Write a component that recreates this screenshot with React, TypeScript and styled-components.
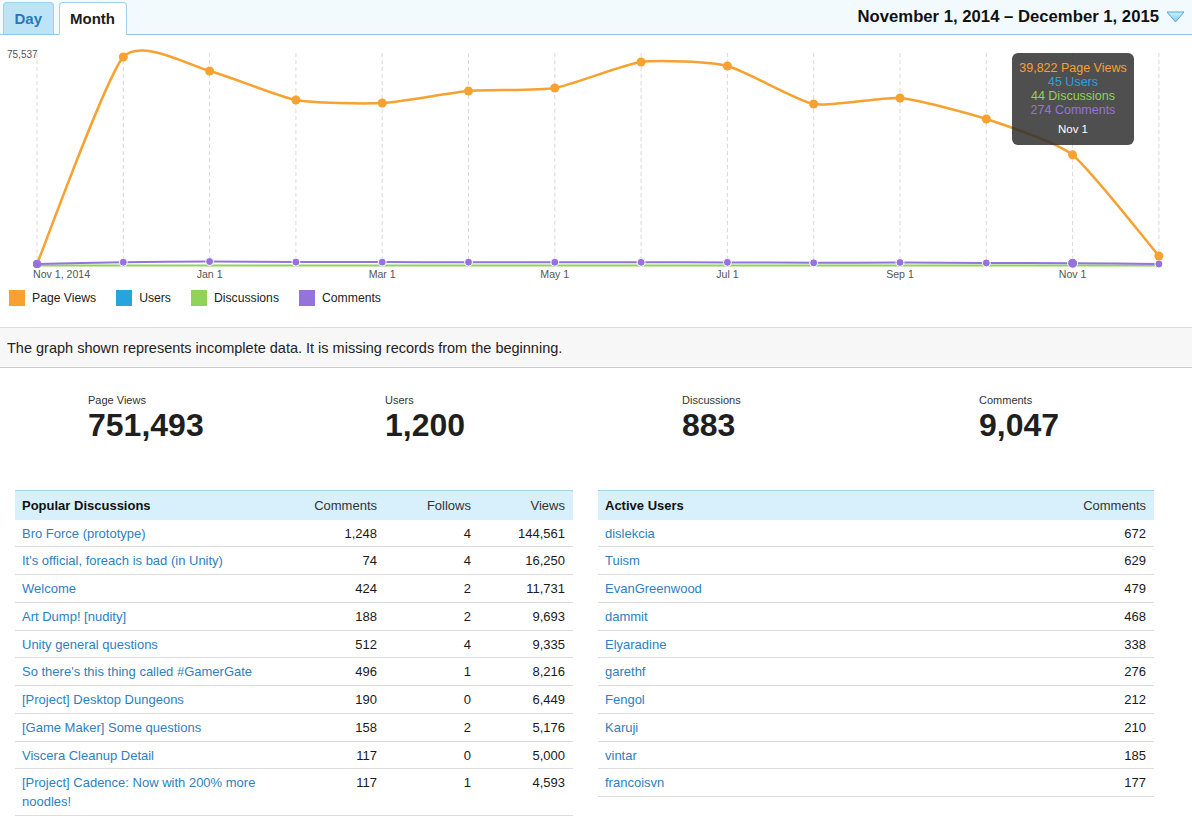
import React from 'react';
import styled, { createGlobalStyle } from 'styled-components';

const GlobalStyle = createGlobalStyle`
  html, body {
    margin: 0;
    padding: 0;
    background: #fff;
  }
  body {
    font-family: 'Liberation Sans', Arial, sans-serif;
    color: #222;
  }
`;

const COLORS = {
  views: '#f7a130',
  users: '#27a3dd',
  discussions: '#8fd457',
  comments: '#9474db',
};

// chart geometry (svg space; svg starts at page y=35)
const X0 = 37;
const STEP = 86.3;
const BASE = 229;
const PLOT_H = 207;
const MAX = 75537;

const pageViews = [0, 75537, 70428, 59845, 58750, 63130, 64224, 73712, 72253, 58385, 60575, 52912, 39822, 2919];
const comments = [0, 640, 900, 700, 680, 660, 640, 620, 600, 420, 560, 380, 274, 10];
const discussions = [0, 70, 90, 70, 60, 60, 60, 55, 55, 45, 50, 40, 44, 2];

const axisLabels = [
  { i: 0, text: 'Nov 1, 2014', anchor: 'start' as const, dx: -4 },
  { i: 2, text: 'Jan 1', anchor: 'middle' as const, dx: 0 },
  { i: 4, text: 'Mar 1', anchor: 'middle' as const, dx: 0 },
  { i: 6, text: 'May 1', anchor: 'middle' as const, dx: 0 },
  { i: 8, text: 'Jul 1', anchor: 'middle' as const, dx: 0 },
  { i: 10, text: 'Sep 1', anchor: 'middle' as const, dx: 0 },
  { i: 12, text: 'Nov 1', anchor: 'middle' as const, dx: 0 },
];

const px = (i: number) => X0 + i * STEP;
const py = (v: number) => BASE - (v / MAX) * PLOT_H;

const spline = (values: number[], offset = 0) => {
  const pts = values.map((v, i) => [px(i), py(v) + offset]);
  const k = 10;
  let d = `M${pts[0][0]},${pts[0][1]}`;
  for (let i = 0; i < pts.length - 1; i++) {
    const p0 = pts[i - 1] || pts[i];
    const p1 = pts[i];
    const p2 = pts[i + 1];
    const p3 = pts[i + 2] || p2;
    const c1x = p1[0] + (p2[0] - p0[0]) / k;
    const c1y = p1[1] + (p2[1] - p0[1]) / k;
    const c2x = p2[0] - (p3[0] - p1[0]) / k;
    const c2y = p2[1] - (p3[1] - p1[1]) / k;
    d += ` C${c1x.toFixed(1)},${c1y.toFixed(1)} ${c2x.toFixed(1)},${c2y.toFixed(1)} ${p2[0].toFixed(1)},${p2[1].toFixed(1)}`;
  }
  return d;
};

const discussionsRows = [
  { name: 'Bro Force (prototype)', comments: '1,248', follows: '4', views: '144,561' },
  { name: "It's official, foreach is bad (in Unity)", comments: '74', follows: '4', views: '16,250' },
  { name: 'Welcome', comments: '424', follows: '2', views: '11,731' },
  { name: 'Art Dump! [nudity]', comments: '188', follows: '2', views: '9,693' },
  { name: 'Unity general questions', comments: '512', follows: '4', views: '9,335' },
  { name: "So there's this thing called #GamerGate", comments: '496', follows: '1', views: '8,216' },
  { name: '[Project] Desktop Dungeons', comments: '190', follows: '0', views: '6,449' },
  { name: '[Game Maker] Some questions', comments: '158', follows: '2', views: '5,176' },
  { name: 'Viscera Cleanup Detail', comments: '117', follows: '0', views: '5,000' },
  { name: '[Project] Cadence: Now with 200% more noodles!', comments: '117', follows: '1', views: '4,593' },
];

const userRows = [
  { name: 'dislekcia', comments: '672' },
  { name: 'Tuism', comments: '629' },
  { name: 'EvanGreenwood', comments: '479' },
  { name: 'dammit', comments: '468' },
  { name: 'Elyaradine', comments: '338' },
  { name: 'garethf', comments: '276' },
  { name: 'Fengol', comments: '212' },
  { name: 'Karuji', comments: '210' },
  { name: 'vintar', comments: '185' },
  { name: 'francoisvn', comments: '177' },
];

const stats = [
  { label: 'Page Views', value: '751,493' },
  { label: 'Users', value: '1,200' },
  { label: 'Discussions', value: '883' },
  { label: 'Comments', value: '9,047' },
];

const Page = styled.div`
  width: 1192px;
`;

const TabBar = styled.div`
  height: 35px;
  box-sizing: border-box;
  display: flex;
  align-items: flex-end;
  gap: 5px;
  padding: 0 7px 0 3px;
  background: #f3fafd;
  border-bottom: 1px solid #8dc7e5;
`;

const Tab = styled.div<{ $active?: boolean }>`
  height: 33px;
  box-sizing: border-box;
  margin-bottom: -1px;
  padding: 0 10.5px;
  line-height: 32px;
  font-size: 15px;
  font-weight: bold;
  border: 1px solid #9fd0ea;
  border-bottom: ${({ $active }) => ($active ? '1px solid #fff' : '1px solid #8dc7e5')};
  border-radius: 4px 4px 0 0;
  background: ${({ $active }) => ($active ? '#fff' : '#bde3f6')};
  color: ${({ $active }) => ($active ? '#1d1d1d' : '#2a79b6')};
`;

const DateRange = styled.div`
  margin-left: auto;
  align-self: center;
  display: flex;
  align-items: center;
  gap: 7px;
  font-size: 16.7px;
  font-weight: bold;
  color: #111;
`;

const ChartArea = styled.div`
  position: relative;
  height: 292px;
`;

const ChartSvg = styled.svg`
  display: block;
`;

const Tooltip = styled.div`
  position: absolute;
  left: 1012px;
  top: 18px;
  width: 122px;
  height: 92px;
  box-sizing: border-box;
  padding-top: 8px;
  border-radius: 6px;
  background: rgba(45, 45, 45, 0.84);
  text-align: center;
  font-size: 12.5px;
  line-height: 14px;
`;

const TipLine = styled.div<{ $color: string }>`
  color: ${({ $color }) => $color};
`;

const TipDate = styled.div`
  margin-top: 5px;
  color: #fff;
  font-size: 11.5px;
`;

const Legend = styled.div`
  display: flex;
  gap: 20px;
  margin-top: 5px;
  padding-left: 9px;
`;

const LegendItem = styled.div`
  display: flex;
  align-items: center;
  gap: 7px;
  font-size: 12.2px;
  color: #222;
  line-height: 16px;
`;

const Swatch = styled.span<{ $color: string }>`
  width: 16px;
  height: 16px;
  background: ${({ $color }) => $color};
`;

const Notice = styled.div`
  height: 41px;
  box-sizing: border-box;
  padding: 0 7px;
  line-height: 41px;
  font-size: 14.5px;
  color: #222;
  background: #f7f7f7;
  border-top: 1px solid #ddd;
  border-bottom: 1px solid #ccc;
`;

const StatsRow = styled.div`
  display: grid;
  grid-template-columns: repeat(4, 297px);
  padding: 25px 0 49px;
`;

const Stat = styled.div`
  padding-left: 88px;
`;

const StatLabel = styled.div`
  font-size: 11px;
  line-height: 14px;
  color: #333;
  margin-bottom: 2px;
`;

const StatValue = styled.div`
  font-size: 32px;
  line-height: 32px;
  font-weight: bold;
  color: #1f1f1f;
`;

const Tables = styled.div`
  display: grid;
  grid-template-columns: 558px 556px;
  align-items: start;
  gap: 25px;
  padding: 0 15px;
`;

const Table = styled.table`
  width: 100%;
  border-collapse: collapse;
  font-size: 13px;
  border-bottom: 1px solid #a6cadb;
`;

const Th = styled.th<{ $first?: boolean; $w?: number }>`
  height: 29px;
  box-sizing: border-box;
  padding: 0 8px 0 7px;
  background: #d8f0fb;
  border-top: 1px solid #a9d4e8;
  text-align: ${({ $first }) => ($first ? 'left' : 'right')};
  font-weight: ${({ $first }) => ($first ? 'bold' : 'normal')};
  color: ${({ $first }) => ($first ? '#111' : '#333')};
  width: ${({ $w }) => ($w ? `${$w}px` : 'auto')};
`;

const Td = styled.td<{ $num?: boolean }>`
  padding: 5px 8px 3px 7px;
  line-height: 18.75px;
  vertical-align: top;
  border-bottom: 1px solid #ddd;
  text-align: ${({ $num }) => ($num ? 'right' : 'left')};
  color: ${({ $num }) => ($num ? '#1a1a1a' : '#2e80c0')};
`;

const Triangle = () => (
  <svg width="19" height="12" viewBox="0 0 19 12">
    <defs>
      <linearGradient id="tri" x1="0" y1="0" x2="0" y2="1">
        <stop offset="0" stopColor="#d4f0fd" />
        <stop offset="1" stopColor="#7cc8ee" />
      </linearGradient>
    </defs>
    <polygon points="1,1 18,1 9.5,11" fill="url(#tri)" stroke="#4fa9d9" strokeWidth="1" strokeLinejoin="round" />
  </svg>
);

const Chart = () => (
  <ChartSvg width={1192} height={250}>
    <text x={7} y={23} fontSize={10} fill="#555" fontFamily="Liberation Sans, Arial, sans-serif">
      75,537
    </text>
    {pageViews.map((_, i) => (
      <line key={i} x1={px(i)} x2={px(i)} y1={18} y2={BASE} stroke="#d9d9d9" strokeDasharray="4 3" />
    ))}
    <path d={spline(discussions, 1.6)} fill="none" stroke={COLORS.discussions} strokeWidth={2} />
    <path d={spline(comments)} fill="none" stroke={COLORS.comments} strokeWidth={2} />
    {comments.map((v, i) => (
      <circle
        key={i}
        cx={px(i)}
        cy={py(v)}
        r={i === 12 ? 5 : 4}
        fill={COLORS.comments}
        stroke="#fff"
        strokeWidth={i === 0 ? 0 : 1}
      />
    ))}
    <path d={spline(pageViews)} fill="none" stroke={COLORS.views} strokeWidth={2.5} />
    {pageViews.map((v, i) => (i === 0 ? null : <circle key={i} cx={px(i)} cy={py(v)} r={4.5} fill={COLORS.views} />))}
    <circle cx={px(0)} cy={BASE} r={4} fill={COLORS.comments} />
    {axisLabels.map((l) => (
      <text
        key={l.i}
        x={px(l.i) + l.dx}
        y={243}
        textAnchor={l.anchor}
        fontSize={10.6}
        fill="#555"
        fontFamily="Liberation Sans, Arial, sans-serif"
      >
        {l.text}
      </text>
    ))}
  </ChartSvg>
);

export default function App() {
  return (
    <Page>
      <GlobalStyle />
      <TabBar>
        <Tab>Day</Tab>
        <Tab $active>Month</Tab>
        <DateRange>
          November 1, 2014 – December 1, 2015
          <Triangle />
        </DateRange>
      </TabBar>

      <ChartArea>
        <Chart />
        <Tooltip>
          <TipLine $color={COLORS.views}>39,822 Page Views</TipLine>
          <TipLine $color={COLORS.users}>45 Users</TipLine>
          <TipLine $color={COLORS.discussions}>44 Discussions</TipLine>
          <TipLine $color={COLORS.comments}>274 Comments</TipLine>
          <TipDate>Nov 1</TipDate>
        </Tooltip>
        <Legend>
          <LegendItem>
            <Swatch $color={COLORS.views} />
            Page Views
          </LegendItem>
          <LegendItem>
            <Swatch $color={COLORS.users} />
            Users
          </LegendItem>
          <LegendItem>
            <Swatch $color={COLORS.discussions} />
            Discussions
          </LegendItem>
          <LegendItem>
            <Swatch $color={COLORS.comments} />
            Comments
          </LegendItem>
        </Legend>
      </ChartArea>

      <Notice>The graph shown represents incomplete data. It is missing records from the beginning.</Notice>

      <StatsRow>
        {stats.map((s) => (
          <Stat key={s.label}>
            <StatLabel>{s.label}</StatLabel>
            <StatValue>{s.value}</StatValue>
          </Stat>
        ))}
      </StatsRow>

      <Tables>
        <Table>
          <thead>
            <tr>
              <Th $first>Popular Discussions</Th>
              <Th $w={85}>Comments</Th>
              <Th $w={94}>Follows</Th>
              <Th $w={94}>Views</Th>
            </tr>
          </thead>
          <tbody>
            {discussionsRows.map((r) => (
              <tr key={r.name}>
                <Td>{r.name}</Td>
                <Td $num>{r.comments}</Td>
                <Td $num>{r.follows}</Td>
                <Td $num>{r.views}</Td>
              </tr>
            ))}
          </tbody>
        </Table>
        <Table>
          <thead>
            <tr>
              <Th $first>Active Users</Th>
              <Th>Comments</Th>
            </tr>
          </thead>
          <tbody>
            {userRows.map((r) => (
              <tr key={r.name}>
                <Td>{r.name}</Td>
                <Td $num>{r.comments}</Td>
              </tr>
            ))}
          </tbody>
        </Table>
      </Tables>
    </Page>
  );
}
